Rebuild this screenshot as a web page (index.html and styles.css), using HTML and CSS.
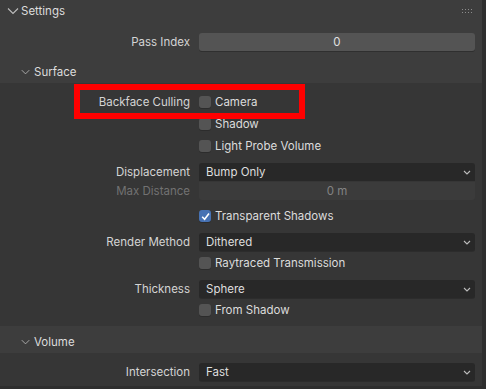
FILE: index.html
```html
<!DOCTYPE html>
<html lang="en">

<head>
    <meta charset="UTF-8">
    <meta name="viewport" content="width=device-width, initial-scale=1.0">
    <title>Material Settings</title>

    <link rel="stylesheet" href="styles.css">
</head>

<body>

    <div class="panel">
        <div class="panel-header">
            <svg class="chevron" width="12" height="8" viewBox="0 0 12 8"><path d="M1 1.5 L6 6.5 L11 1.5" /></svg>
            <span>Settings</span>
            <div class="grip">
                <i></i><i></i><i></i><i></i><i></i><i></i><i></i><i></i>
            </div>
        </div>

        <div class="panel-body">
            <div class="row field-row">
                <label>Pass Index</label>
                <div class="number">0</div>
            </div>
        </div>

        <!-- Surface subpanel -->
        <div class="sub-header">
            <svg class="chevron" width="12" height="8" viewBox="0 0 12 8"><path d="M1 1.5 L6 6.5 L11 1.5" /></svg>
            <span>Surface</span>
        </div>
        <div class="sub-body surface">
            <div class="row check-row">
                <label>Backface Culling</label>
                <div class="check"><span class="box"></span>Camera</div>
            </div>
            <div class="row check-row">
                <label></label>
                <div class="check"><span class="box"></span>Shadow</div>
            </div>
            <div class="row check-row">
                <label></label>
                <div class="check"><span class="box"></span>Light Probe Volume</div>
            </div>
            <div class="row field-row gap5">
                <label>Displacement</label>
                <div class="dropdown joined-top">Bump Only
                    <svg class="drop-arrow" width="8" height="5" viewBox="0 0 8 5"><path d="M1 1 L4 4 L7 1" /></svg>
                </div>
            </div>
            <div class="row field-row">
                <label class="disabled">Max Distance</label>
                <div class="number disabled-field joined-bottom">0 m</div>
            </div>
            <div class="row check-row gap5">
                <label></label>
                <div class="check"><span class="box checked">
                    <svg width="11" height="11" viewBox="0 0 11 11"><path d="M2.2 5.8 L4.6 8.2 L9 2.6" /></svg>
                </span>Transparent Shadows</div>
            </div>
            <div class="row field-row gap5">
                <label>Render Method</label>
                <div class="dropdown">Dithered
                    <svg class="drop-arrow" width="8" height="5" viewBox="0 0 8 5"><path d="M1 1 L4 4 L7 1" /></svg>
                </div>
            </div>
            <div class="row check-row gap1">
                <label></label>
                <div class="check"><span class="box"></span>Raytraced Transmission</div>
            </div>
            <div class="row field-row gap5">
                <label>Thickness</label>
                <div class="dropdown">Sphere
                    <svg class="drop-arrow" width="8" height="5" viewBox="0 0 8 5"><path d="M1 1 L4 4 L7 1" /></svg>
                </div>
            </div>
            <div class="row check-row gap1">
                <label></label>
                <div class="check"><span class="box"></span>From Shadow</div>
            </div>

            <div class="highlight"></div>
        </div>

        <!-- Volume subpanel -->
        <div class="sub-header volume-header">
            <svg class="chevron" width="12" height="8" viewBox="0 0 12 8"><path d="M1 1.5 L6 6.5 L11 1.5" /></svg>
            <span>Volume</span>
        </div>
        <div class="sub-body volume">
            <div class="row field-row">
                <label>Intersection</label>
                <div class="dropdown">Fast
                    <svg class="drop-arrow" width="8" height="5" viewBox="0 0 8 5"><path d="M1 1 L4 4 L7 1" /></svg>
                </div>
            </div>
        </div>
    </div>

</body>

</html>
```

FILE: styles.css
```css
body {
    margin: 0;
    background-color: #2e2e2e;
    font-family: Inter, "Noto Sans", sans-serif;
    font-size: 11.5px;
    color: #dcdcdc;
}

.panel {
    position: relative;
    width: 482px;
    height: 386px;
    background-color: #3d3d3d;
    overflow: hidden;
}

.chevron path,
.drop-arrow path {
    fill: none;
    stroke: #bdbdbd;
    stroke-width: 1.1;
}

.panel-header {
    display: flex;
    align-items: center;
    height: 22px;
    padding-left: 7px;
}

.panel-header .chevron {
    margin-right: 2px;
}

.grip {
    display: grid;
    grid-template-columns: repeat(4, 1px);
    gap: 2px;
    margin-left: auto;
    margin-right: 10px;
}

.grip i {
    width: 1px;
    height: 1px;
    background-color: #8c8c8c;
}

.panel-body {
    padding: 10px 0 10px;
}

.row {
    display: grid;
    grid-template-columns: 190px 276px;
    column-gap: 9px;
    align-items: center;
}

.row label {
    text-align: right;
    color: #d4d4d4;
}

.row label.disabled {
    color: #727272;
}

.field-row {
    height: 19px;
}

.check-row {
    height: 22px;
}

.gap1 { margin-top: 1px; }
.gap5 { margin-top: 5px; }

.number {
    height: 18px;
    line-height: 18px;
    background-color: #545454;
    border-radius: 3px;
    box-shadow: 0 1px 0 #2f2f2f;
    text-align: center;
    color: #e0e0e0;
}

.disabled-field {
    background-color: #3b3b3b;
    color: #838383;
    box-shadow: none;
}

.dropdown {
    position: relative;
    height: 18px;
    line-height: 18px;
    padding-left: 7px;
    background-color: #282828;
    border-radius: 3px;
    box-shadow: 0 1px 0 #2c2c2c;
    color: #dedede;
}

.drop-arrow {
    position: absolute;
    right: 4px;
    top: 7px;
}

.joined-top {
    border-radius: 3px 3px 0 0;
    box-shadow: none;
}

.joined-bottom {
    border-radius: 0 0 3px 3px;
}

.check {
    display: flex;
    align-items: center;
    color: #dcdcdc;
}

.box {
    display: flex;
    align-items: center;
    justify-content: center;
    width: 12px;
    height: 12px;
    margin-right: 4px;
    background-color: #545454;
    border-radius: 3px;
    box-shadow: 0 1px 0 #2c2c2c;
}

.box.checked {
    background-color: #4772b3;
}

.box.checked path {
    fill: none;
    stroke: #ffffff;
    stroke-width: 1.6;
}

.sub-header {
    display: flex;
    align-items: center;
    height: 22px;
    padding-left: 21px;
}

.sub-header .chevron {
    width: 9px;
    margin-right: 4px;
}

.sub-body {
    position: relative;
    background-color: #363636;
}

.surface {
    padding: 8px 0 5px;
}

.volume-header {
    height: 23px;
    padding-top: 4px;
}

.volume {
    padding: 9px 0 5px;
    height: 19px;
}

.highlight {
    position: absolute;
    left: 74px;
    top: 1px;
    width: 219px;
    height: 23px;
    border: 6px solid #ff0000;
}
```
